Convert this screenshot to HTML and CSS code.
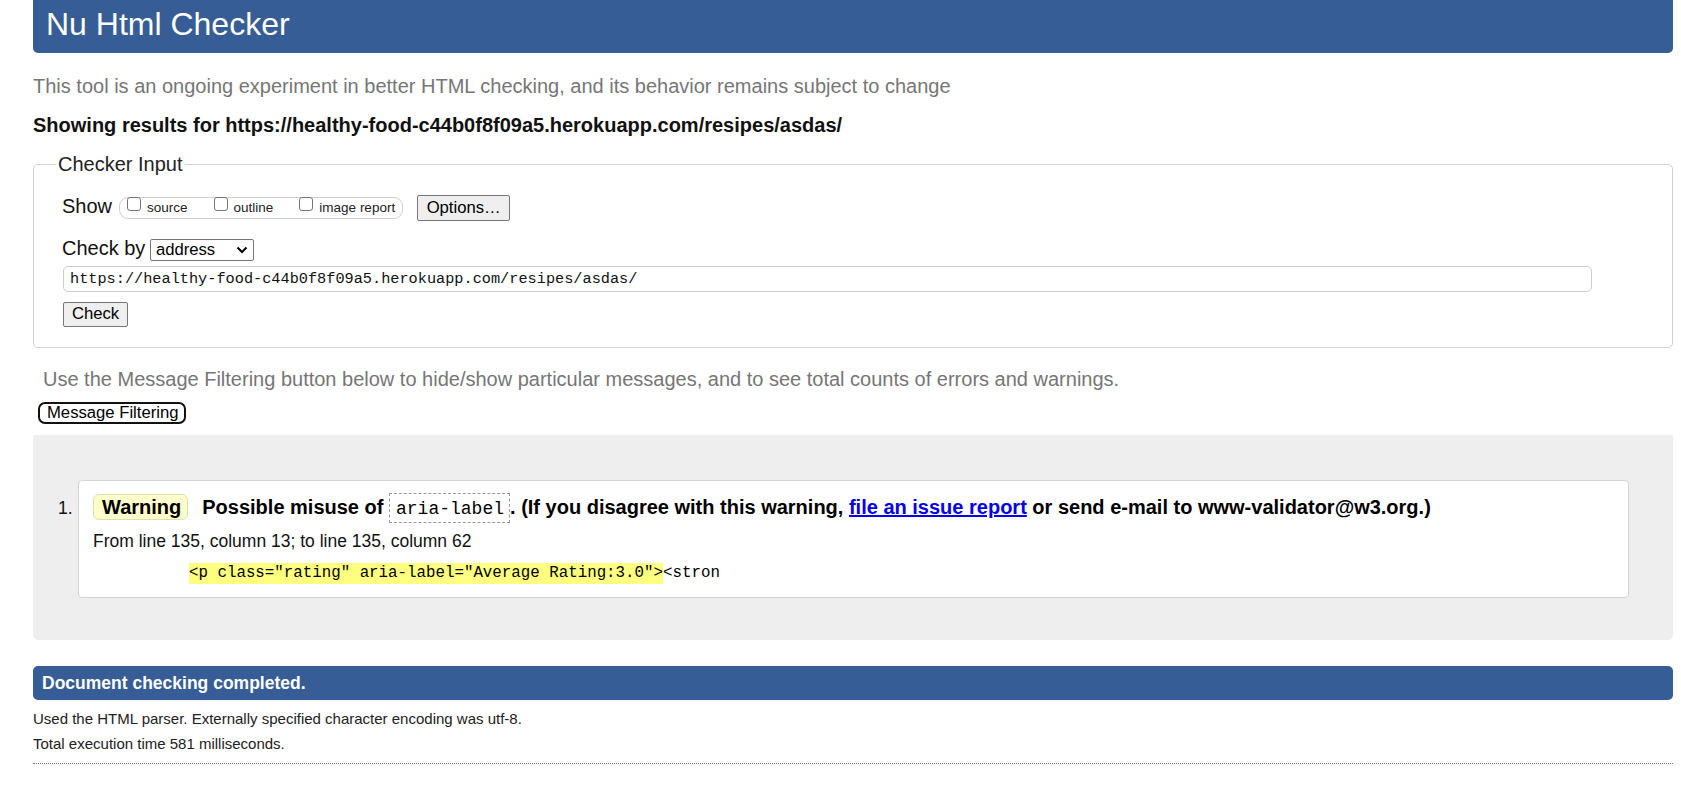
FILE: index.html
```html
<!DOCTYPE html>
<html lang="en">
<head>
<meta charset="utf-8">
<title>Showing results for https://healthy-food-c44b0f8f09a5.herokuapp.com/resipes/asdas/ - Nu Html Checker</title>
<link rel="stylesheet" href="styles.css">
</head>
<body>
<h1 class="topbar">Nu Html Checker</h1>
<p class="intro">This tool is an ongoing experiment in better HTML checking, and its behavior remains subject to change</p>
<p class="showing">Showing results for https://healthy-food-c44b0f8f09a5.herokuapp.com/resipes/asdas/</p>

<form class="checker">
  <fieldset class="checker-input">
    <legend class="legend">Checker Input</legend>
    <div class="row row-show">
      <span class="row-label">Show</span>
      <span class="show-group">
        <label class="opt"><input type="checkbox" class="cb"><span class="opt-text">source</span></label>
        <label class="opt"><input type="checkbox" class="cb"><span class="opt-text">outline</span></label>
        <label class="opt"><input type="checkbox" class="cb"><span class="opt-text">image report</span></label>
      </span>
      <button type="button" class="btn btn-options">Options…</button>
    </div>
    <div class="row row-checkby">
      <span class="row-label row-label-by">Check by</span>
      <span class="select">
        <span class="select-text">address</span>
        <svg class="chev" width="12" height="8" viewBox="0 0 12 8"><path d="M1.5 1.5 L6 6 L10.5 1.5" fill="none" stroke="#000" stroke-width="2"/></svg>
      </span>
    </div>
    <div class="row row-url">
      <input class="url" type="text" value="https://healthy-food-c44b0f8f09a5.herokuapp.com/resipes/asdas/">
    </div>
    <div class="row row-submit">
      <button type="button" class="btn btn-check">Check</button>
    </div>
  </fieldset>
</form>

<p class="filter-hint">Use the Message Filtering button below to hide/show particular messages, and to see total counts of errors and warnings.</p>
<div class="filter-row"><button type="button" class="btn-filter">Message Filtering</button></div>

<div class="results">
  <ol class="msg-list">
    <li class="msg-item">
      <span class="msg-num">1.</span>
      <div class="msg-box">
        <p class="msg-head"><span class="badge">Warning</span>Possible misuse of <code class="attr">aria-label</code>. (If you disagree with this warning, <a class="link" href="#">file an issue report</a> or send e-mail to www-validator@w3.org.)</p>
        <p class="msg-loc">From line 135, column 13; to line 135, column 62</p>
        <p class="extract"><span class="hl">&lt;p class="rating" aria-label="Average Rating:3.0"&gt;</span>&lt;stron</p>
      </div>
    </li>
  </ol>
</div>

<h2 class="done">Document checking completed.</h2>
<p class="meta meta-first">Used the HTML parser. Externally specified character encoding was utf-8.</p>
<p class="meta">Total execution time 581 milliseconds.</p>
<hr class="dots">
</body>
</html>
```

FILE: styles.css
```css
html, body {
  background: #fff;
}
body {
  margin: 0;
  padding: 0 8px 0 33px;
  font-family: "Liberation Sans", Arial, sans-serif;
  font-size: 20px;
  line-height: 23px;
  color: #111;
}
p { margin: 0; }

.topbar {
  margin: 0;
  height: 53px;
  box-sizing: border-box;
  background: #365d95;
  color: #fff;
  border-radius: 0 0 5px 5px;
  font-size: 32px;
  font-weight: normal;
  line-height: 48px;
  padding-left: 13px;
}

.intro {
  margin-top: 21.6px;
  color: #767676;
}
.showing {
  margin-top: 16px;
  font-weight: bold;
  color: #111;
}

.checker { margin: 0; }
.checker-input {
  margin: 16px 0 0 0;
  border: 1px solid #cfcfcf;
  border-radius: 5px;
  padding: 19.4px 27px 20px 28px;
  min-width: 0;
}
.legend {
  padding: 0 2px;
  margin-left: -6px;
  font-size: 20px;
  line-height: 23px;
  color: #222;
}

.row {
  display: flex;
  align-items: flex-start;
}
.row-show { height: 26px; }
.row-label { color: #111; white-space: nowrap; }
.row-label-by { margin-top: -1.5px; }

.show-group {
  display: flex;
  flex: none;
  align-items: flex-start;
  margin: 2px 0 0 7px;
  height: 22px;
  box-sizing: border-box;
  border: 1px solid #d0d0d0;
  border-radius: 9px;
  padding: 0 7px;
}
.opt {
  display: flex;
  flex: none;
  align-items: flex-start;
  margin-right: 26px;
  white-space: nowrap;
}
.opt:last-child { margin-right: 0; }
.cb {
  appearance: none;
  -webkit-appearance: none;
  flex: none;
  width: 14px;
  height: 14px;
  margin: -1px 6px 0 0;
  box-sizing: border-box;
  border: 1px solid #767676;
  border-radius: 3px;
  background: #fff;
}
.opt-text {
  font-size: 13.5px;
  line-height: 16px;
  margin-top: 2.3px;
  color: #222;
}

.btn {
  font-family: "Liberation Sans", Arial, sans-serif;
  font-size: 16.67px;
  color: #000;
  background: #efefef;
  border: 1px solid #767676;
  border-radius: 2px;
  box-sizing: border-box;
  padding: 0;
  margin: 0;
}
.btn-options {
  flex: none;
  margin-left: 14px;
  width: 93px;
  height: 26px;
}

.row-checkby {
  margin-top: 18px;
  height: 22px;
}
.select {
  display: flex;
  align-items: center;
  justify-content: space-between;
  margin-left: 4.5px;
  width: 104px;
  height: 22px;
  box-sizing: border-box;
  border: 1px solid #767676;
  border-radius: 2px;
  padding: 0 5px 0 5px;
  font-size: 16.67px;
  color: #000;
  background: #fff;
}
.chev { margin-top: 1px; }

.row-url { margin-top: 5px; }
.url {
  margin: 0 0 0 1px;
  width: calc(100% - 54px);
  height: 26px;
  box-sizing: border-box;
  border: 1px solid #cccccc;
  border-radius: 5px;
  padding: 0 6px;
  font-family: "Liberation Mono", monospace;
  font-size: 15.25px;
  color: #111;
  background: #fff;
}

.row-submit { margin-top: 10px; }
.btn-check {
  margin-left: 1px;
  width: 65px;
  height: 25px;
}

.filter-hint {
  margin-top: 20px;
  padding-left: 10px;
  color: #767676;
}
.filter-row {
  display: flex;
  margin-top: 11.4px;
  height: 22px;
}
.btn-filter {
  margin: 0 0 0 5px;
  height: 22px;
  box-sizing: border-box;
  background: #fff;
  border: 2px solid #111;
  border-radius: 7px;
  padding: 0 6px 0 7px;
  font-family: "Liberation Sans", Arial, sans-serif;
  font-size: 16.67px;
  line-height: 18px;
  color: #000;
}

.results {
  margin-top: 11px;
  background: #eeeeee;
  border-radius: 0 0 5px 5px;
  padding: 45px 44px 42px 25px;
}
.msg-list {
  margin: 0;
  padding: 0;
  list-style: none;
}
.msg-item {
  display: flex;
  align-items: flex-start;
}
.msg-num {
  width: 20px;
  flex: none;
  margin-top: 18px;
  font-size: 17.5px;
  line-height: 20px;
  color: #111;
}
.msg-box {
  flex: 1;
  background: #fff;
  border: 1px solid #d3d3d3;
  border-radius: 4px;
  padding: 11px 14px 13px 14px;
}
.msg-head {
  font-size: 20px;
  line-height: 30px;
  font-weight: bold;
  color: #000;
}
.badge {
  display: inline-block;
  background: #ffffcc;
  border: 1px solid #e0dfaa;
  border-radius: 6px;
  padding: 1px 6px 0 8px;
  line-height: 23px;
  margin-right: 14px;
}
.attr {
  display: inline-block;
  font-family: "Liberation Mono", monospace;
  font-weight: normal;
  font-size: 18px;
  line-height: 26px;
  padding: 2px 5px 0 6px;
  border: 1px dashed #999;
  color: #000;
}
.link {
  color: #0000ee;
  text-decoration: underline;
}
.msg-loc {
  margin-top: 8px;
  font-size: 17.5px;
  line-height: 20px;
  color: #111;
}
.extract {
  margin-top: 12px;
  padding-left: 96px;
  font-family: "Liberation Mono", monospace;
  font-size: 15.8px;
  line-height: 21px;
  color: #000;
  white-space: pre;
}
.hl {
  display: inline-block;
  background: #ffff80;
}

.done {
  margin: 26px 0 0 0;
  height: 34px;
  box-sizing: border-box;
  background: #365d95;
  color: #fff;
  border-radius: 5px;
  padding-left: 9px;
  font-size: 17.5px;
  line-height: 34px;
  font-weight: bold;
}
.meta {
  font-size: 15px;
  line-height: 17px;
  margin-top: 8px;
  color: #222;
}
.meta-first { margin-top: 9.5px; }
.dots {
  margin: 11px 0 0 0;
  border: 0;
  border-top: 1px dotted #777;
  height: 0;
}
```
